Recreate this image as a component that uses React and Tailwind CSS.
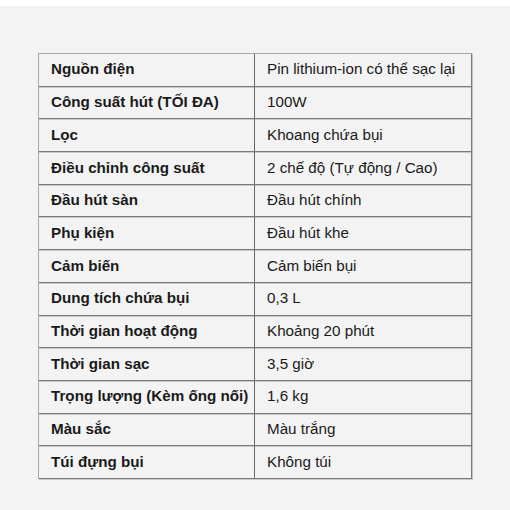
import React from 'react';

const specs = [
    ['Nguồn điện', 'Pin lithium-ion có thể sạc lại'],
    ['Công suất hút (TỐI ĐA)', '100W'],
    ['Lọc', 'Khoang chứa bụi'],
    ['Điều chỉnh công suất', '2 chế độ (Tự động / Cao)'],
    ['Đầu hút sàn', 'Đầu hút chính'],
    ['Phụ kiện', 'Đầu hút khe'],
    ['Cảm biến', 'Cảm biến bụi'],
    ['Dung tích chứa bụi', '0,3 L'],
    ['Thời gian hoạt động', 'Khoảng 20 phút'],
    ['Thời gian sạc', '3,5 giờ'],
    ['Trọng lượng (Kèm ống nối)', '1,6 kg'],
    ['Màu sắc', 'Màu trắng'],
    ['Túi đựng bụi', 'Không túi'],
];

const App = () => {
    return (
        <div className="w-[510px] h-[510px] bg-white" style={{ fontFamily: '"Liberation Sans", Arial, sans-serif' }}>
            <div className="mt-[6px] h-[504px] bg-[#f3f3f3] pt-[47px] pl-[38px]">
                {/* Spec table */}
                <div className="w-[434px] border-t border-l border-[#a8a8a8] shadow-[1px_1px_0_#c4c4c4] text-[15.2px] text-[#1a1a1a]">
                    {specs.map(([label, value]) => (
                        <div
                            key={label}
                            className="flex h-[32.7px] border-b border-[#7a7a7a] shadow-[0_1px_0_#c8c8c8]"
                        >
                            <div className="w-[216px] shrink-0 flex items-center pl-[12px] font-bold whitespace-nowrap border-r border-[#666]">
                                {label}
                            </div>
                            <div className="flex-1 flex items-center pl-[12px] border-r border-[#7a7a7a]">
                                {value}
                            </div>
                        </div>
                    ))}
                </div>
            </div>
        </div>
    );
};

export default App;
